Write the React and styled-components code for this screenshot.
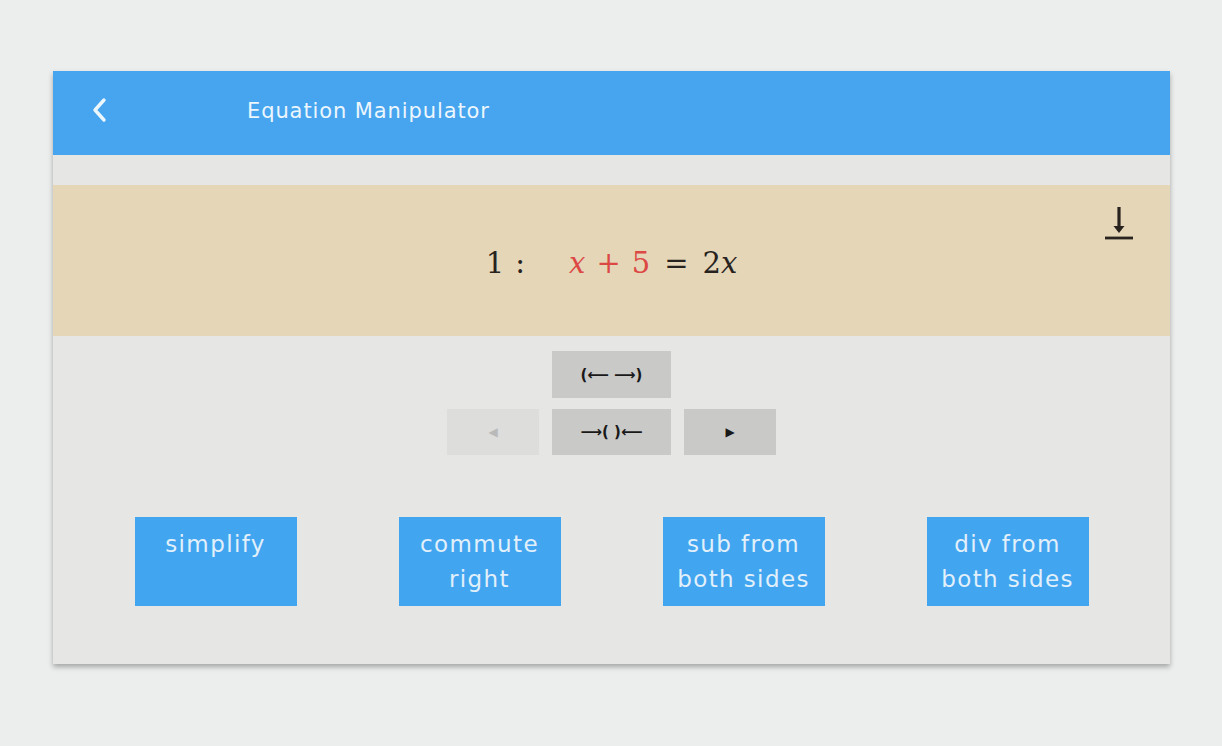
import React from 'react';
import styled, { createGlobalStyle } from 'styled-components';

const Global = createGlobalStyle`
  html, body {
    margin: 0;
    padding: 0;
    background: rgb(236, 238, 238);
    font-family: "DejaVu Sans", "Liberation Sans", sans-serif;
  }
`;

const Page = styled.div`
  width: 1222px;
  height: 746px;
  padding: 71px 52px 0 53px;
  box-sizing: border-box;
`;

const Card = styled.div`
  height: 593px;
  background: rgb(230, 230, 228);
  box-shadow: 0 3px 5px rgba(0, 0, 0, 0.3);
  display: flex;
  flex-direction: column;
`;

const Header = styled.div`
  height: 84px;
  background: rgb(70, 165, 238);
  display: flex;
  align-items: center;
  padding-left: 36px;
  color: rgb(236, 246, 253);
`;

const Back = styled.svg`
  width: 20px;
  height: 28px;
  margin-top: -6px;
`;

const Title = styled.div`
  margin-left: 138px;
  margin-top: -4px;
  font-size: 21px;
  letter-spacing: 0.9px;
`;

const EquationBand = styled.div`
  margin-top: 30px;
  height: 151px;
  background: rgb(229, 214, 184);
  display: flex;
  align-items: center;
  justify-content: center;
  position: relative;
`;

const Equation = styled.div`
  font-family: "DejaVu Serif", "Liberation Serif", serif;
  font-size: 29px;
  color: rgb(40, 35, 30);
  display: flex;
  align-items: baseline;
  margin-top: 4px;
`;

const Num = styled.span`
  margin-right: 44px;
  word-spacing: 2px;
`;

const Part = styled.span`
  color: ${p => p.$color || 'inherit'};
`;

const Op = styled.span`
  margin: 0 ${p => p.$gap || 11}px;
`;

const Var = styled.i`
  font-style: italic;
`;

const Download = styled.svg`
  position: absolute;
  right: 33px;
  top: 18px;
  width: 36px;
  height: 40px;
`;

const Controls = styled.div`
  display: flex;
  flex-direction: column;
  align-items: center;
  gap: 11px;
  margin-top: 15px;
`;

const ControlRow = styled.div`
  display: flex;
  gap: 13px;
  align-items: center;
`;

const SmallBtn = styled.div`
  width: ${p => p.$w}px;
  height: ${p => p.$h || 46}px;
  background: ${p => (p.$disabled ? 'rgb(221, 221, 219)' : 'rgb(201, 201, 199)')};
  color: ${p => (p.$disabled ? 'rgb(185, 185, 185)' : 'rgb(25, 25, 25)')};
  display: flex;
  align-items: center;
  justify-content: center;
  font-family: "DejaVu Sans", sans-serif;
  font-size: ${p => p.$size || 15}px;
  font-weight: bold;
`;

const Actions = styled.div`
  display: flex;
  justify-content: center;
  gap: 102px;
  margin-top: 62px;
`;

const ActionBtn = styled.div`
  width: 162px;
  height: 89px;
  box-sizing: border-box;
  padding-top: 10px;
  background: rgb(66, 165, 240);
  color: rgb(225, 240, 250);
  font-size: 23px;
  line-height: 35px;
  text-align: center;
  letter-spacing: 1.4px;
`;

const actions = [
  ['simplify'],
  ['commute', 'right'],
  ['sub from', 'both sides'],
  ['div from', 'both sides'],
];

export default function App() {
  return (
    <Page>
      <Global />
      <Card>
        <Header>
          <Back viewBox="0 0 20 28">
            <path d="M15 4 L6 14 L15 24" fill="none" stroke="currentColor" strokeWidth="3.4" strokeLinecap="round" strokeLinejoin="round" />
          </Back>
          <Title>Equation Manipulator</Title>
        </Header>
        <EquationBand>
          <Equation>
            <Num>1 :</Num>
            <Part $color="rgb(220, 72, 68)">
              <Var>x</Var>
              <Op>+</Op>5
            </Part>
            <Op $gap={14}>=</Op>
            <span>
              2<Var>x</Var>
            </span>
          </Equation>
          <Download viewBox="0 0 36 40">
            <path d="M18 4 V28" stroke="rgb(40,35,30)" strokeWidth="3.2" />
            <path d="M12.5 23 L18 30 L23.5 23 Z" fill="rgb(40,35,30)" />
            <path d="M4 35 H32" stroke="rgb(40,35,30)" strokeWidth="2.8" />
          </Download>
        </EquationBand>
        <Controls>
          <SmallBtn $w={119} $h={47}>(⟵ ⟶)</SmallBtn>
          <ControlRow>
            <SmallBtn $w={92} $size={12} $disabled>◀</SmallBtn>
            <SmallBtn $w={119}>⟶( )⟵</SmallBtn>
            <SmallBtn $w={92} $size={12}>▶</SmallBtn>
          </ControlRow>
        </Controls>
        <Actions>
          {actions.map(lines => (
            <ActionBtn key={lines.join(' ')}>
              {lines.map(l => (
                <div key={l}>{l}</div>
              ))}
            </ActionBtn>
          ))}
        </Actions>
      </Card>
    </Page>
  );
}
